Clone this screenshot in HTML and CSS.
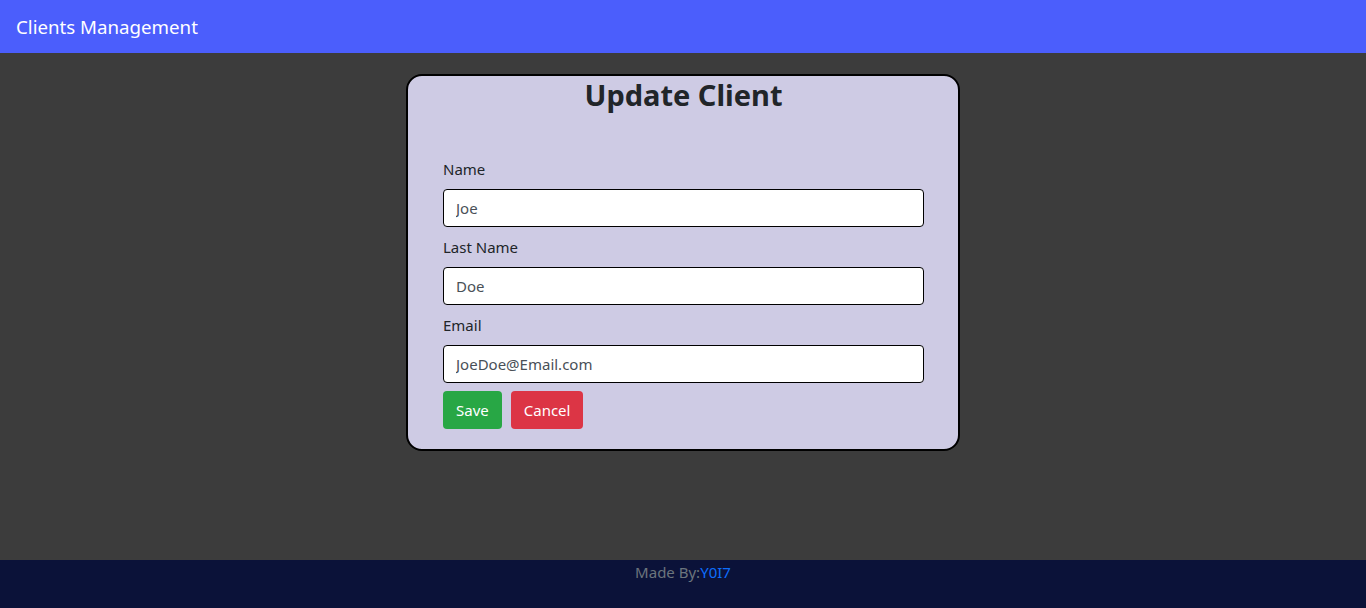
FILE: index.html
```html
<!DOCTYPE html>
<html lang="en">
<head>
<meta charset="utf-8">
<title>Clients Management</title>
<link rel="stylesheet" href="styles.css">
</head>
<body>
<header class="navbar">
  <span class="brand">Clients Management</span>
</header>
<main class="content">
  <form class="card">
    <h2 class="title">Update Client</h2>
    <div class="field">
      <label class="label" for="name">Name</label>
      <input class="input" id="name" type="text" value="Joe">
    </div>
    <div class="field">
      <label class="label" for="last">Last Name</label>
      <input class="input" id="last" type="text" value="Doe">
    </div>
    <div class="field">
      <label class="label" for="email">Email</label>
      <input class="input" id="email" type="text" value="JoeDoe@Email.com">
    </div>
    <div class="actions">
      <button type="button" class="btn btn-save">Save</button>
      <button type="button" class="btn btn-cancel">Cancel</button>
    </div>
  </form>
</main>
<footer class="footer">
  <span class="made">Made By:</span><a class="author" href="#">Y0I7</a>
</footer>
</body>
</html>
```

FILE: styles.css
```css
* { box-sizing: border-box; }
html, body { height: 100%; }
body {
  margin: 0;
  font-family: "Noto Sans", "Open Sans", sans-serif;
  font-size: 16px;
  background: #3c3c3c;
  color: #212529;
  display: flex;
  flex-direction: column;
  min-height: 608px;
}
.navbar {
  height: 53px;
  background: #4b5efc;
  display: flex;
  align-items: center;
  padding: 0 16px;
}
.brand {
  color: #fff;
  font-size: 18.7px;
  line-height: 24px;
}
.content {
  flex: 1;
  display: flex;
  justify-content: center;
  align-items: flex-start;
  padding-top: 21px;
}
.card {
  width: 554px;
  background: #cecbe4;
  border: 2px solid #000;
  border-radius: 16px;
  padding: 0 34px 20px 35px;
}
.title {
  margin: 0 0 43px;
  text-align: center;
  font-size: 29px;
  font-weight: 700;
  line-height: 38px;
  color: #212529;
}
.field {
  display: flex;
  flex-direction: column;
  margin-bottom: 8px;
}
.label {
  font-size: 15px;
  line-height: 24px;
  margin-bottom: 8px;
  color: #212529;
}
.input {
  height: 38px;
  width: 100%;
  border: 1px solid #000;
  border-radius: 4px;
  padding: 0 12px;
  font-family: inherit;
  font-size: 15px;
  color: #495057;
  background: #fff;
}
.actions {
  display: flex;
  gap: 9px;
}
.btn {
  height: 38px;
  padding: 0 13px;
  border: none;
  border-radius: 4px;
  font-family: inherit;
  font-size: 15px;
  color: #fff;
}
.btn-save { background: #28a745; }
.btn-cancel { background: #dc3545; }
.footer {
  height: 48px;
  background: #0b1239;
  text-align: center;
  line-height: 24px;
  font-size: 15px;
}
.made { color: #6c757d; }
.author { color: #0d6efd; text-decoration: none; }
```
